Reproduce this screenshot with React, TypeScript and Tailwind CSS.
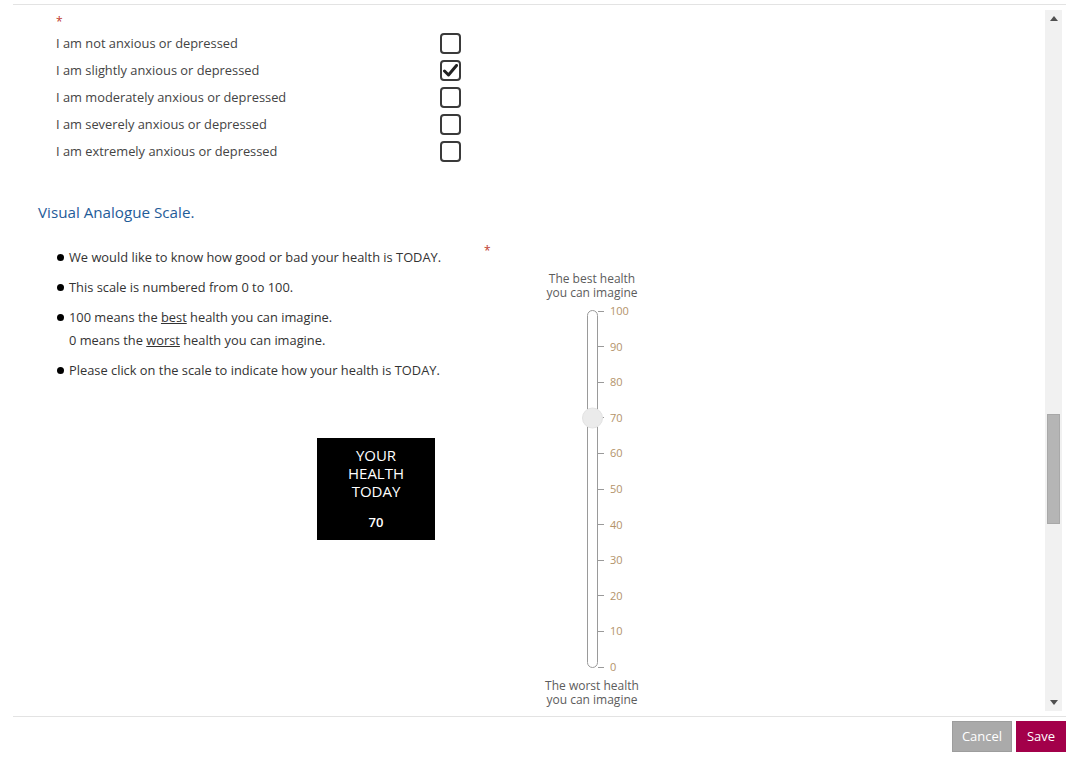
import { useState } from "react";

const options = [
  "I am not anxious or depressed",
  "I am slightly anxious or depressed",
  "I am moderately anxious or depressed",
  "I am severely anxious or depressed",
  "I am extremely anxious or depressed",
];

const ticks = [100, 90, 80, 70, 60, 50, 40, 30, 20, 10, 0];
const TRACK_H = 358;

function Checkbox({ checked }: { checked: boolean }) {
  return (
    <div className="w-[21px] h-[21px] rounded-[4px] border-2 border-[#3a3a3a] bg-white flex items-center justify-center">
      {checked && (
        <svg width="15" height="13" viewBox="0 0 15 13">
          <path d="M1.5 7 L5.5 11 L13.5 1.5" fill="none" stroke="#222" strokeWidth="3" strokeLinejoin="round" strokeLinecap="round" />
        </svg>
      )}
    </div>
  );
}

function Bullet({ children, first }: { children: React.ReactNode; first?: boolean }) {
  return (
    <li className={first ? "flex" : "flex mt-[7px]"}>
      <span className="w-[12px] h-[23px] flex items-center">
        <span className="w-[7px] h-[7px] rounded-full bg-black" />
      </span>
      <span>{children}</span>
    </li>
  );
}

function Scale({ value }: { value: number }) {
  return (
    <div className="w-[120px] flex flex-col items-center text-[12px] leading-[14px] text-[#5c5c5c]">
      <div className="text-center">The best health<br />you can imagine</div>
      <div className="relative mt-[10px] w-[120px]" style={{ height: TRACK_H }}>
        <div className="absolute left-[55px] top-0 w-[11px] h-full rounded-full border border-[#9a9a9a] bg-white" />
        {ticks.map(t => (
          <div
            key={t}
            className="absolute left-[66px] flex items-center -translate-y-1/2"
            style={{ top: TRACK_H - (t / 100) * (TRACK_H - 2) - 1 }}
          >
            <div className="w-[6px] h-px bg-[#9a9a9a]" />
            <span className="ml-[6px] text-[11px] leading-[12px] text-[#b3936a]">{t}</span>
          </div>
        ))}
        <div
          className="absolute left-[50px] w-[21px] h-[21px] rounded-full bg-[#ebebeb] border border-[#e2e2e2] -translate-y-1/2"
          style={{ top: TRACK_H - (value / 100) * (TRACK_H - 2) - 1 }}
        />
      </div>
      <div className="text-center mt-[11px]">The worst health<br />you can imagine</div>
    </div>
  );
}

export default function App() {
  const [selected, setSelected] = useState(1);
  const value = 70;

  return (
    <div className="w-full h-[757px] bg-white text-[12.85px] text-[#444]" style={{ fontFamily: '"Open Sans", "Liberation Sans", sans-serif' }}>
      <div className="ml-[13px] mr-[15px] mt-[4px] h-[713px] border-t border-b border-[#e3e3e3] flex">
        <div className="flex-1 overflow-hidden">
          <div className="pl-[43px] pt-[9px]">
            <div className="h-[16px] leading-[16px] text-[#c0392b] text-[12px]">*</div>
            {options.map((o, i) => (
              <div key={o} className="h-[27px] flex items-center cursor-pointer" onClick={() => setSelected(i)}>
                <span className="w-[384px]">{o}</span>
                <Checkbox checked={selected === i} />
              </div>
            ))}
          </div>

          <div className="pl-[25px] mt-[37px] text-[15.2px] leading-[20px] text-[#1f5c99]">Visual Analogue Scale.</div>

          <div className="flex mt-[19px]">
            <div className="w-[467px]">
              <ul className="pl-[44px] pt-[5px] text-[#333] leading-[23px]">
                <Bullet first>We would like to know how good or bad your health is TODAY.</Bullet>
                <Bullet>This scale is numbered from 0 to 100.</Bullet>
                <Bullet>
                  100 means the <u>best</u> health you can imagine.<br />
                  0 means the <u>worst</u> health you can imagine.
                </Bullet>
                <Bullet>Please click on the scale to indicate how your health is TODAY.</Bullet>
              </ul>
              <div className="ml-[304px] mt-[56px] w-[118px] h-[102px] bg-black text-white flex flex-col items-center pt-[8px]">
                <div className="text-[15px] leading-[18px] text-center">YOUR<br />HEALTH<br />TODAY</div>
                <div className="mt-[13px] text-[13px] font-semibold">{value}</div>
              </div>
            </div>
            <div className="flex-1">
              <div className="pl-[4px] mt-[2px] h-[16px] leading-[16px] text-[#c0392b] text-[12px]">*</div>
              <div className="ml-[52px] mt-[13px]">
                <Scale value={value} />
              </div>
            </div>
          </div>
        </div>

        <div className="w-[17px] mr-[4px] my-[5px] bg-[#f1f1f1] flex flex-col items-center">
          <div className="mt-[6px] w-0 h-0 border-l-[4px] border-r-[4px] border-b-[5px] border-l-transparent border-r-transparent border-b-[#505050]" />
          <div className="mt-[393px] w-[13px] h-[110px] bg-[#b5b5b5] border border-[#a8a8a8]" />
          <div className="mt-auto mb-[6px] w-0 h-0 border-l-[4px] border-r-[4px] border-t-[5px] border-l-transparent border-r-transparent border-t-[#505050]" />
        </div>
      </div>

      <div className="flex justify-end gap-[4px] mr-[15px] mt-[4px]">
        <button className="w-[60px] h-[31px] bg-[#aaaaaa] border border-[#9d9d9d] text-white text-[13px]">Cancel</button>
        <button className="w-[50px] h-[31px] bg-[#a3004a] text-white text-[13px]">Save</button>
      </div>
    </div>
  );
}
